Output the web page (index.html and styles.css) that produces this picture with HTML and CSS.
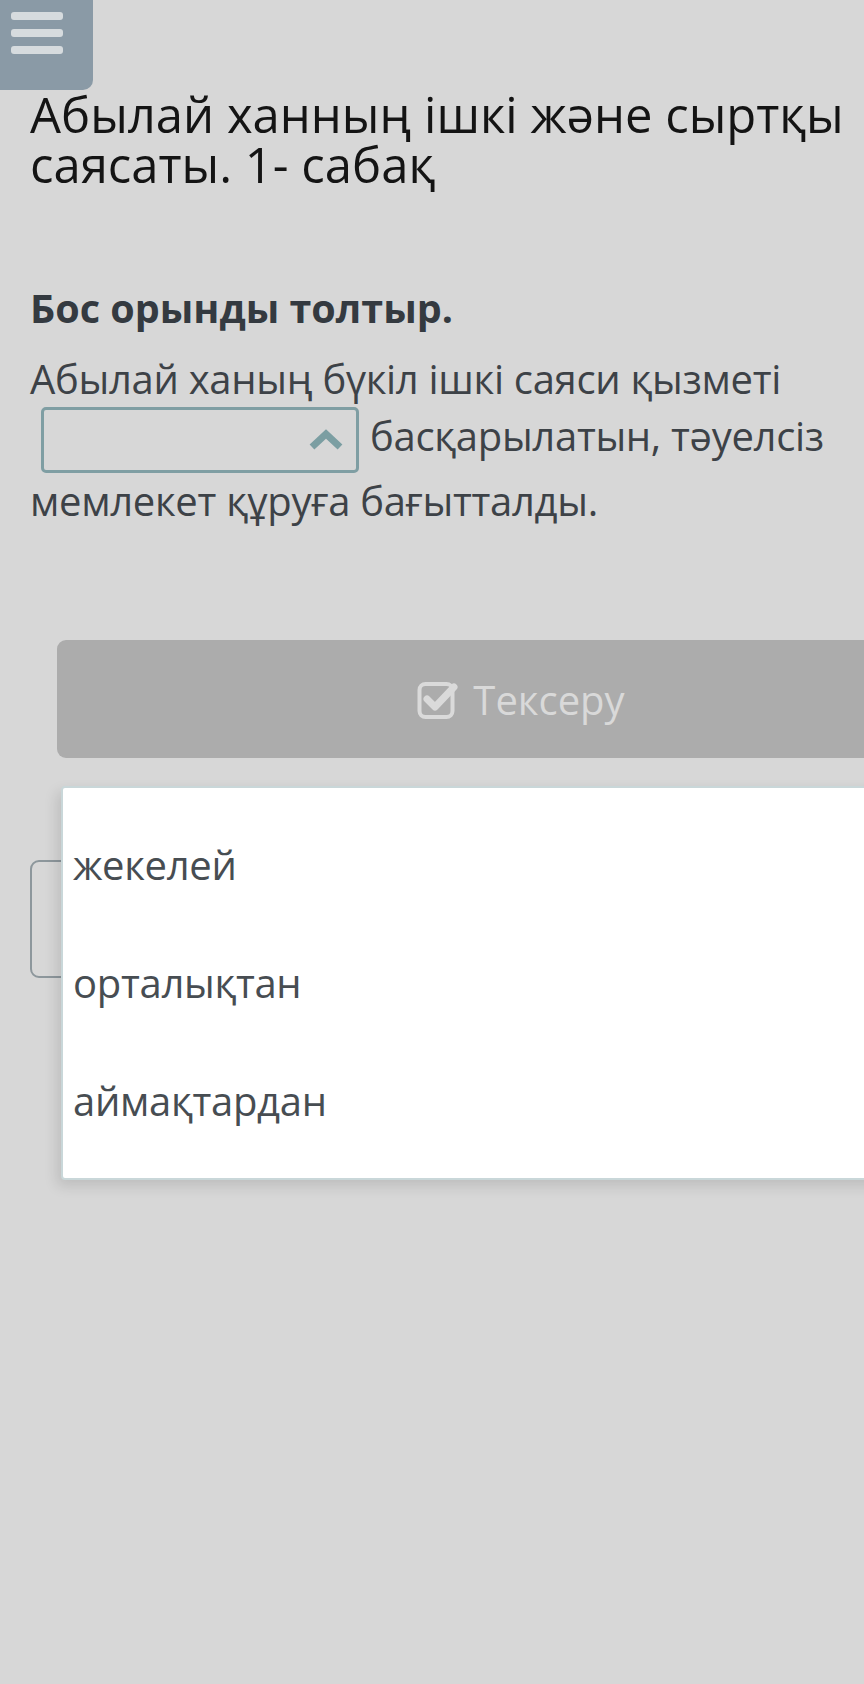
FILE: index.html
```html
<!DOCTYPE html>
<html lang="kk">
<head>
    <meta charset="UTF-8">
    <meta name="viewport" content="width=device-width, initial-scale=1.0">
    <title>Абылай ханның ішкі және сыртқы саясаты. 1- сабақ</title>
    <link rel="stylesheet" href="styles.css">
</head>
<body>

<button class="menu-btn" aria-label="Мәзір">
    <span></span>
    <span></span>
    <span></span>
</button>

<div class="page">
    <h1 class="lesson-title">Абылай ханның ішкі және сыртқы саясаты. 1- сабақ</h1>

    <h2 class="task-title">Бос орынды толтыр.</h2>

    <p class="task-text">
        Абылай ханың бүкіл ішкі саяси қызметі
        <span class="blank">
            <svg class="chevron" width="36" height="22" viewBox="0 0 36 22">
                <path d="M4 18 L18 5 L32 18" fill="none" stroke="#7b9ea2" stroke-width="7" stroke-linejoin="miter"/>
            </svg>
        </span>
        басқарылатын, тәуелсіз мемлекет құруға бағытталды.
    </p>

    <button class="check-btn" disabled>
        <svg width="44" height="42" viewBox="0 0 44 42">
            <rect x="2.5" y="6" width="33" height="33" rx="6" fill="none" stroke="#dadada" stroke-width="4"/>
            <path d="M10 21 L18 29 L37 9" fill="none" stroke="#dadada" stroke-width="7" stroke-linecap="round" stroke-linejoin="round"/>
        </svg>
        Тексеру
    </button>

    <div class="next-box"></div>

    <ul class="options">
        <li>жекелей</li>
        <li>орталықтан</li>
        <li>аймақтардан</li>
    </ul>
</div>

</body>
</html>
```

FILE: styles.css
```css
html, body {
    margin: 0;
    background-color: #d7d7d7;
}
body {
    font-family: "Open Sans", "Noto Sans", sans-serif;
    min-height: 1684px;
    overflow-x: hidden;
    position: relative;
}
.menu-btn {
    position: absolute;
    top: 0;
    left: 0;
    width: 93px;
    height: 90px;
    padding: 12px 0 0 11px;
    border: none;
    border-bottom-right-radius: 10px;
    background-color: #8a9aa6;
    display: flex;
    flex-direction: column;
    gap: 9px;
    z-index: 2;
}
.menu-btn span {
    display: block;
    width: 52px;
    height: 8px;
    border-radius: 3px;
    background-color: #d6dbde;
}
.page {
    position: relative;
    padding: 89px 0 0 30px;
}
.lesson-title {
    margin: 0;
    font-size: 49px;
    font-weight: 400;
    line-height: 50px;
    color: #141414;
}
.task-title {
    margin: 94px 0 0;
    font-size: 39.5px;
    font-weight: 700;
    line-height: 50px;
    color: #343a40;
}
.task-text {
    margin: 18px 0 0;
    font-size: 40px;
    letter-spacing: -0.3px;
    line-height: 56px;
    color: #3d4247;
    padding-right: 20px;
}
.blank {
    display: inline-flex;
    align-items: center;
    justify-content: flex-end;
    box-sizing: border-box;
    width: 318px;
    height: 66px;
    margin: 0 1px 0 11px;
    padding-right: 12px;
    border: 3px solid #7f9ea3;
    border-radius: 5px;
    vertical-align: middle;
}
.check-btn {
    display: flex;
    align-items: center;
    justify-content: center;
    gap: 12px;
    width: 928px;
    height: 118px;
    margin: 111px 0 0 27px;
    border: none;
    border-radius: 9px;
    background-color: #acacac;
    color: #d9d9d9;
    font-family: inherit;
    font-size: 40px;
}
.next-box {
    width: 800px;
    height: 118px;
    margin-top: 102px;
    box-sizing: border-box;
    border: 2px solid #8d979c;
    border-radius: 9px;
}
.options {
    position: absolute;
    top: 786px;
    left: 61px;
    width: 840px;
    margin: 0;
    padding: 18px 0 18px;
    list-style: none;
    background-color: #ffffff;
    border: 2px solid #c9d7d9;
    border-radius: 4px;
    box-shadow: -4px 6px 14px rgba(0, 0, 0, 0.12);
}
.options li {
    padding-left: 10px;
    font-size: 40px;
    letter-spacing: -0.3px;
    line-height: 118px;
    color: #474d52;
}
```
